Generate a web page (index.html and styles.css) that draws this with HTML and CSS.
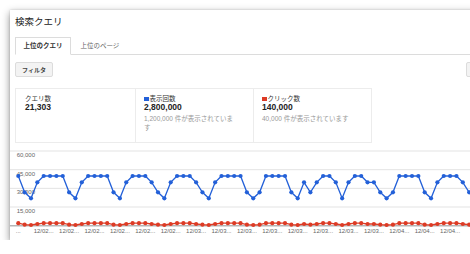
FILE: index.html
```html
<!DOCTYPE html>
<html lang="ja">
<head>
  <meta charset="UTF-8" />
  <meta name="viewport" content="width=device-width, initial-scale=1.0"/>
  <title>検索クエリ</title>
  <link rel="stylesheet" href="styles.css">
</head>
<body>
  <div class="panel">
    <h1 class="title">検索クエリ</h1>

    <div class="tabs">
      <span class="tab active">上位のクエリ</span>
      <span class="tab">上位のページ</span>
    </div>

    <div class="toolbar">
      <button class="btn">フィルタ</button>
      <button class="btn btn-right" aria-label="ダウンロード"></button>
    </div>

    <div class="stats">
      <div class="stat">
        <div class="stat-label">クエリ数</div>
        <div class="stat-value">21,303</div>
      </div>
      <div class="stat">
        <div class="stat-label"><span class="swatch blue"></span>表示回数</div>
        <div class="stat-value">2,800,000</div>
        <div class="stat-note">1,200,000 件が表示されています</div>
      </div>
      <div class="stat">
        <div class="stat-label"><span class="swatch red"></span>クリック数</div>
        <div class="stat-value">140,000</div>
        <div class="stat-note">40,000 件が表示されています</div>
      </div>
    </div>

    <svg class="chart" id="chart" width="490" height="90"></svg>
  </div>

  <script>
    // a = high, b = mid-high, c = mid-low, d = low (weekly pattern)
    const codes = 'acdbaaaacdbaaaacdbaaabc' + 'dbaaabcdbaaaacdcaaaacdbcb' + 'aabdbaabbcdcaaaacdbaaabc' + 'db';
    const blueY = { a: 26, b: 32.3, c: 42.3, d: 48.3 };
    const redY = { a: 73.2, b: 74, c: 74.7, d: 75 };
    const step = 6.35;
    const x0 = 8.3;
    const ns = 'http://www.w3.org/2000/svg';
    const svg = document.getElementById('chart');

    function el(name, attrs, text) {
      const node = document.createElementNS(ns, name);
      for (const k in attrs) node.setAttribute(k, attrs[k]);
      if (text) node.textContent = text;
      svg.appendChild(node);
      return node;
    }

    // y axis labels, drawn under the grid
    const ticks = [['60,000', 1], ['45,000', 19.7], ['30,000', 38.35], ['15,000', 57]];
    ticks.forEach(([label, y]) => {
      el('text', { x: 6.7, y: y + 6, class: 'axis' }, label);
    });
    ticks.forEach(([label, y]) => {
      el('line', { x1: 0, x2: 490, y1: y, y2: y, class: 'grid' });
    });
    el('line', { x1: 0, x2: 490, y1: 75.8, y2: 75.8, class: 'baseline' });

    for (let i = 0; i <= 68; i += 4) {
      let label = '12/02...';
      if (i === 0) label = '...';
      else if (i >= 60) label = '12/04...';
      else if (i >= 28) label = '12/03...';
      el('text', { x: x0 + i * step, y: 83.2, class: 'axis', 'text-anchor': 'middle' }, label);
    }

    function series(map, cls) {
      const pts = codes.split('').map((c, i) => [x0 + i * step, map[c]]);
      el('polyline', { points: pts.map(p => p.join(',')).join(' '), class: 'line ' + cls });
      pts.forEach(p => el('circle', { cx: p[0], cy: p[1], r: 2.1, class: 'dot ' + cls }));
    }

    series(redY, 'red');
    series(blueY, 'blue');
  </script>
</body>
</html>
```

FILE: styles.css
```css
* {
  box-sizing: border-box;
  margin: 0;
  padding: 0;
}

body {
  background: #fff;
  overflow: hidden;
  font-family: "Liberation Sans", "Noto Sans CJK JP", sans-serif;
  color: #333;
}

.panel {
  width: 500px;
  height: 230px;
  margin: 10px 0 0 10px;
  padding: 0 4px 0 5px;
  background: #fff;
  box-shadow: 0 3px 8px rgba(0, 0, 0, 0.45), 0 0 2px rgba(0, 0, 0, 0.15);
  overflow: hidden;
}

.title {
  padding-top: 6px;
  font-size: 9.5px;
  line-height: 12px;
  font-weight: normal;
  color: #222;
}

.tabs {
  display: flex;
  height: 18px;
  margin-top: 9px;
  border-bottom: 1px solid #dcdcdc;
}

.tab {
  height: 17px;
  padding: 0 7.5px;
  font-size: 6.5px;
  line-height: 17px;
  color: #666;
}

.tab.active {
  height: 18px;
  margin-bottom: -1px;
  border: 1px solid #dcdcdc;
  border-bottom-color: #fff;
  line-height: 16px;
  font-weight: bold;
  color: #333;
  background: #fff;
}

.tab + .tab {
  margin-left: 2px;
}

.toolbar {
  display: flex;
  height: 15px;
  margin-top: 7px;
}

.btn {
  height: 15px;
  padding: 0 6px;
  font-family: inherit;
  font-size: 6px;
  font-weight: bold;
  color: #444;
  background: #f3f3f3;
  border: 1px solid #dcdcdc;
  border-radius: 2px;
  white-space: nowrap;
}

.btn-right {
  width: 40px;
  margin-left: auto;
}

.stats {
  display: grid;
  grid-template-columns: 119px 118px 118px;
  width: max-content;
  height: 55px;
  margin-top: 11px;
  border: 1px solid #ececec;
}

.stat {
  padding: 6px 17px 0 8px;
  border-left: 1px solid #ececec;
}

.stat:first-child {
  padding-left: 9px;
  border-left: none;
}

.stat-label {
  display: flex;
  align-items: center;
  font-size: 6.5px;
  line-height: 8px;
  color: #333;
}

.swatch {
  width: 4.5px;
  height: 4.5px;
  margin-right: 1px;
}

.swatch.blue { background: #2360d8; }
.swatch.red { background: #dd3b25; }

.stat-value {
  font-size: 8.5px;
  line-height: 8px;
  font-weight: bold;
  color: #222;
}

.stat-note {
  margin-top: 4px;
  font-size: 6.5px;
  line-height: 8.5px;
  color: #999;
}

.chart {
  display: block;
  margin: 7px 0 0 -5px;
}

.chart .axis {
  font-family: "Liberation Sans", sans-serif;
  font-size: 6px;
  fill: #666;
}

.chart .grid {
  stroke: #e3e3e3;
  stroke-width: 1;
}

.chart .baseline {
  stroke: #b5b5b5;
  stroke-width: 1.5;
}

.chart .line {
  fill: none;
  stroke-width: 1.3;
}

.chart .line.blue { stroke: #2360d8; }
.chart .line.red { stroke: #dd3b25; }
.chart .dot.blue { fill: #2360d8; }
.chart .dot.red { fill: #dd3b25; }
```
